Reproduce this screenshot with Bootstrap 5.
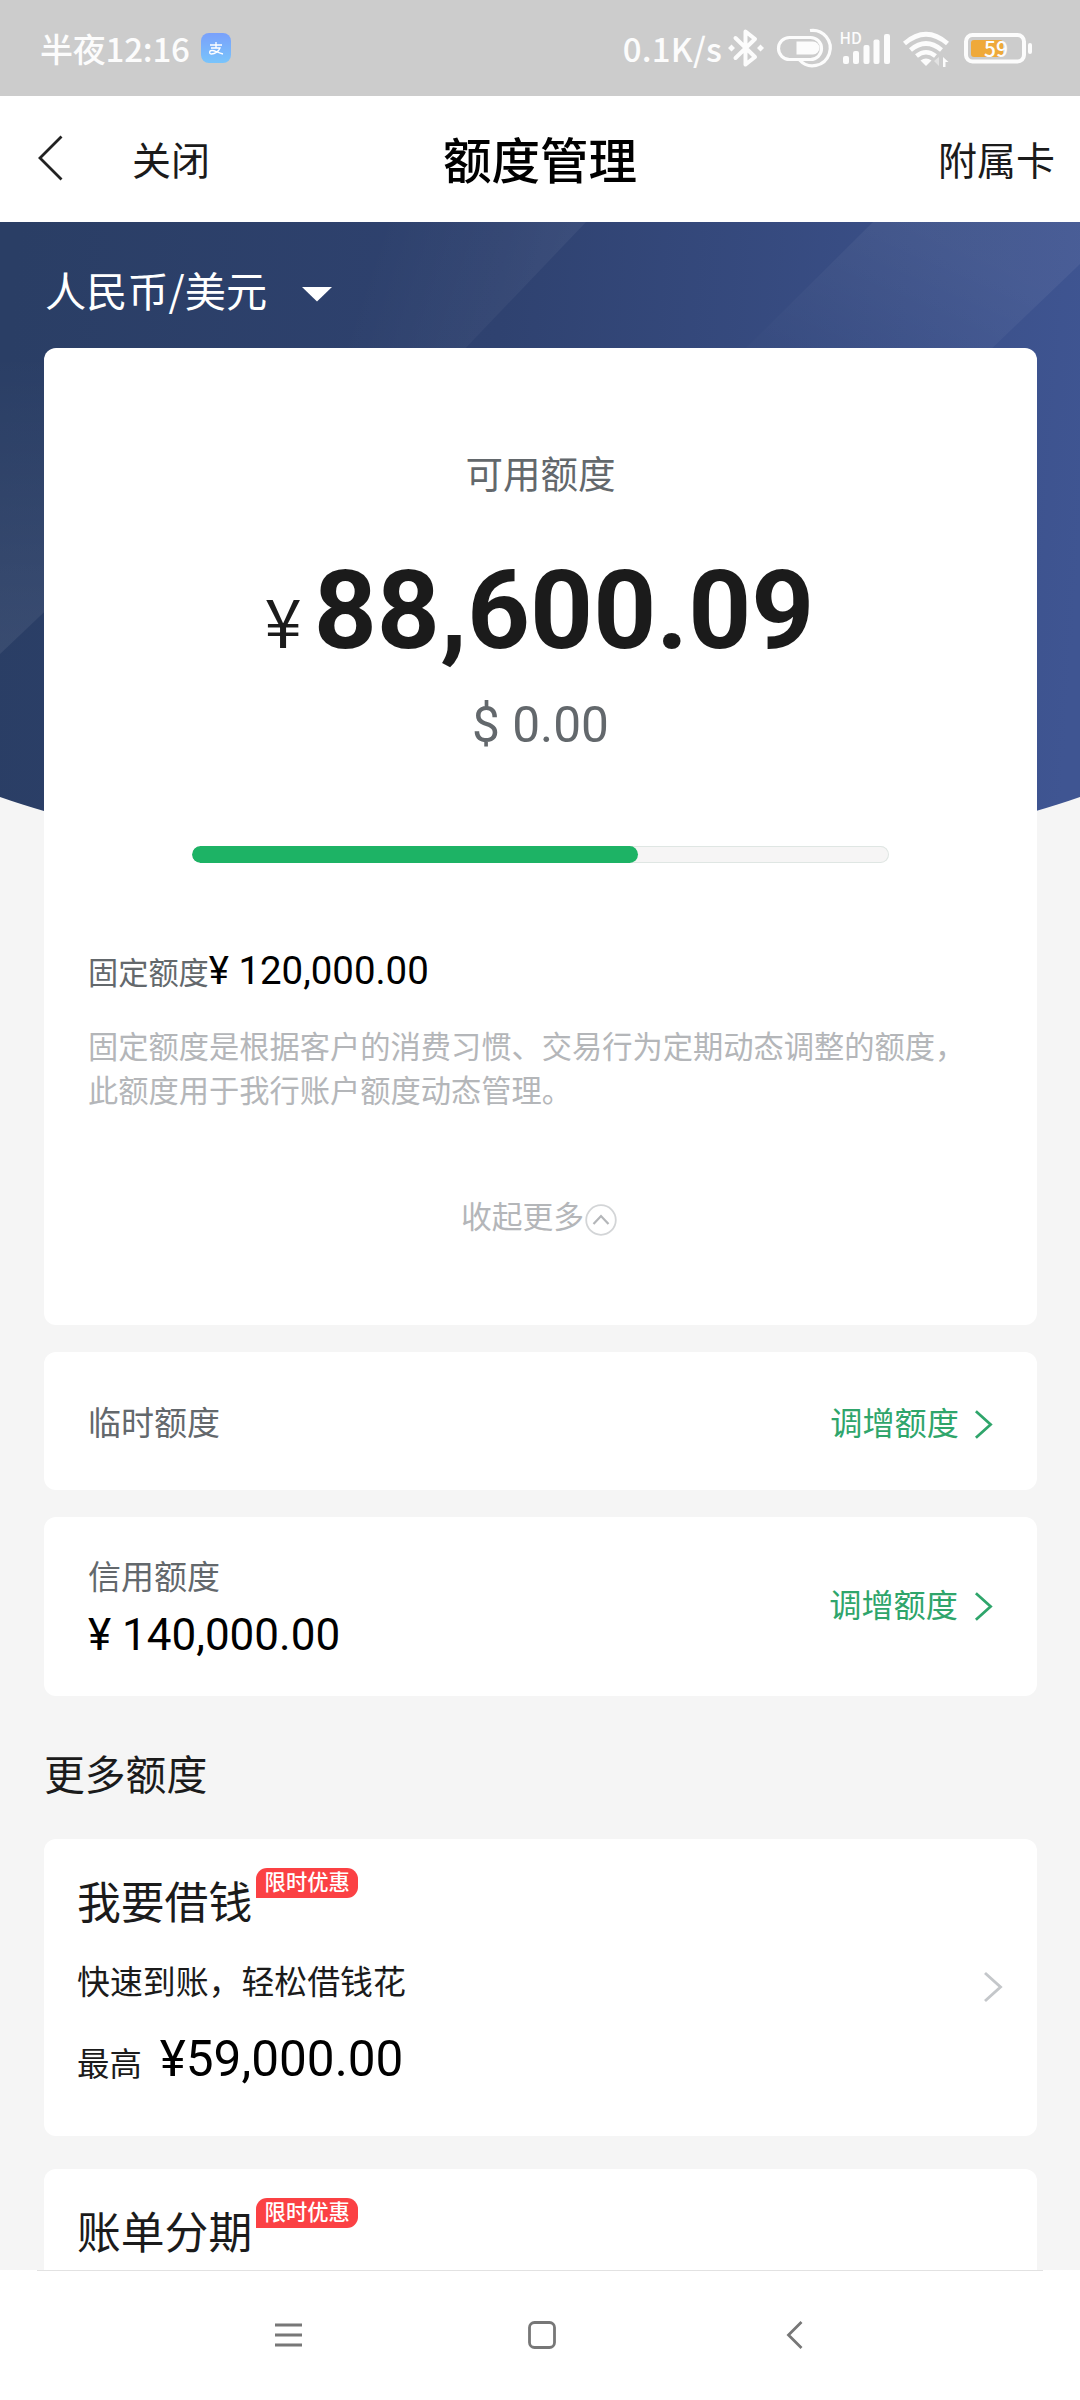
<!DOCTYPE html>
<html lang="zh-CN">
<head>
<meta charset="utf-8">
<meta name="viewport" content="width=device-width, initial-scale=1">
<title>额度管理</title>
<link href="https://cdn.jsdelivr.net/npm/bootstrap@5.3.0/dist/css/bootstrap.min.css" rel="stylesheet">
<style>
  body { width: 1080px; height: 2400px; overflow: hidden; background: #f5f5f5; color: #1b1b1b; font-family: "Noto Sans CJK SC", sans-serif; }
  svg { display: block; flex: none; }
  .num { font-family: Roboto, "Noto Sans CJK SC", sans-serif; color: #000; }
  .statusbar { height: 96px; background: #ccc; color: #fcfcfc; padding: 0 44px 0 40px; font-size: 33px; font-weight: 500; line-height: 44px; }
  .statusbar .clock { width: 161px; letter-spacing: -.2px; }
  .statusbar .rate { letter-spacing: .2px; margin-right: 2px; }
  .statusbar text { fill: #fcfcfc; }
  .titlebar { height: 126px; background: #fff; padding: 0 25px 3px 38px; font-size: 39px; line-height: 60px; }
  .titlebar h1 { font-size: 48.5px; font-weight: 500; line-height: 60px; color: #000; }
  .side-start { width: 240px; }
  .side-end { width: 253px; }
  .close-link { margin-left: 68px; }
  .backdrop { z-index: -1; top: 0; left: 0; }
  .hero { z-index: 0; }
  .currency { height: 126px; padding: 8px 45px 0; color: #fff; font-size: 41.2px; line-height: 60px; gap: 35px; }
  .currency svg { margin-top: 10px; }
  .sheet { margin: 0 43px 0 44px; background: #fff; border: 0; border-radius: 12px; }
  .sheet-main { height: 977px; padding: 104px 44px 0; }
  .label-gray { color: #63686c; }
  .avail { font-size: 37.5px; line-height: 40px; }
  .total { margin-top: 64px; height: 110px; color: #1b1b1b; gap: 12px; padding-right: 2px; }
  .total .yen { font-size: 67px; line-height: 67px; }
  .total .big { font-size: 110px; line-height: 110px; font-weight: 700; font-family: Roboto, sans-serif; }
  .usd { margin-top: 34px; font-size: 49.6px; line-height: 50px; font-family: Roboto, sans-serif; }
  .meter { margin: 96px 104px 0 104px; width: 697px; height: 17px; border-radius: 9px; background: #f6f5f5; box-shadow: inset 0 0 0 1px #dfe6e3; }
  .meter .progress-bar { background: #1db365; border-radius: 9px; }
  .fixed-row { margin-top: 86px; line-height: 44px; font-size: 30.2px; }
  .fixed-row .num { font-size: 38.4px; }
  .explain { margin: 30px -30px 0 0; font-size: 30.25px; line-height: 44px; color: #b4b6b9; }
  .collapse-link { margin-top: 83px; margin-right: 3px; font-size: 30.8px; line-height: 40px; color: #b4b6b9; gap: 1px; }
  .collapse-link svg { margin-top: 10px; }
  .limit { margin-top: 27px; padding: 0 44px; font-size: 33px; line-height: 46px; }
  .limit-temp { height: 138px; }
  .limit-credit { height: 179px; }
  .limit-credit .label-gray { margin-top: -2px; }
  .limit-credit .num { font-size: 44px; line-height: 50px; margin-top: 12px; }
  .raise { color: #2fa56b; font-size: 32.2px; gap: 15px; }
  .raise svg { margin-top: 6px; }
  .limit-credit .raise { gap: 16px; padding-bottom: 7px; }
  .section-title { margin: 47px 44px 0; font-size: 40.8px; font-weight: 400; line-height: 60px; }
  .offer { padding: 31px 34px 0; }
  .offer-loan { height: 297px; margin-top: 36px; }
  .offer-bill { height: 101px; margin-top: 33px; border-radius: 12px 12px 0 0; }
  .offer h3 { font-size: 43.8px; font-weight: 400; line-height: 60px; margin-left: -1px; }
  .offer-go { color: #c4c7ca; margin-bottom: 32px; }
  .promo { height: 30px; width: 102px; margin: -2px 0 0 4px; background: #fb4144; color: #fff; border-radius: 11px 11px 11px 0; font-size: 21.3px; line-height: 26px; font-weight: 500; }
  .desc { font-size: 32.9px; line-height: 46px; margin: 27px 0 0 -1px; }
  .upto { font-size: 32.4px; line-height: 60px; margin: 26px 0 0 -1px; gap: 18px; }
  .upto .num { font-size: 49.5px; }
  .rule { height: 1px; margin: 0 37px; background: #e2e2e2; }
  .sys-icons { height: 129px; padding: 0 277px 2px 275px; }
  .sys-home { margin-right: 5px; }
</style>
</head>
<body>
<svg width="0" height="0" class="position-absolute">
  <symbol id="chev" viewBox="0 0 20 32"><path d="M2 2L17.500 16L2 30" fill="none" stroke="currentColor" stroke-width="2.900"/></symbol>
</svg>

<div class="statusbar d-flex align-items-center">
  <span class="clock text-nowrap">半夜12:16</span>
  <svg width="30" height="30" viewBox="0 0 30 30">
    <defs><linearGradient id="app" x1="0" y1="0" x2="0" y2="1"><stop offset="0" stop-color="#79a0fb"/><stop offset="1" stop-color="#79c4fb"/></linearGradient></defs>
    <rect width="30" height="30" rx="8" fill="url(#app)"/>
    <path d="M9 12H21M15 9V15M10 15H19C18 18 14 21 10.500 21C8 21 8 17.500 11 17.500C14 17.500 17 20 22 21" fill="none" stroke="#fff" stroke-width="1.300"/>
  </svg>
  <span class="rate ms-auto text-nowrap">0.1K/s</span>
  <svg width="312" height="48" viewBox="724 24 312 48" fill="none" stroke="#fcfcfc">
    <path d="M735.500 38L755 57L745.500 64.500V31.500L755 39L735.500 58" stroke-width="4" stroke-linejoin="round" stroke-linecap="round"/>
    <path d="M731.500 44.500L735 48L731.500 51.500L728 48ZM760.500 44.500L764 48L760.500 51.500L757 48Z" fill="#fcfcfc" stroke="none"/>
    <rect x="778.500" y="37.500" width="43" height="22" rx="11" stroke-width="3.200"/>
    <path d="M796.500 41.500H813A6.500 6.500 0 0 1 813 54.500H796.500Z" fill="#fcfcfc" stroke="none"/>
    <path d="M810 30.500A17.700 17.700 0 1 1 799.500 60" stroke-width="3.200"/>
    <g fill="#fcfcfc" stroke="none">
      <rect x="843" y="56" width="6" height="8" rx="2"/><rect x="853" y="51" width="6" height="13" rx="2"/><rect x="863.500" y="45" width="6" height="19" rx="2"/><rect x="873.500" y="39.500" width="6" height="24.500" rx="2"/><rect x="884" y="34" width="6" height="30" rx="2"/>
      <text x="839.500" y="44" font-size="15.500" font-weight="500" stroke="none">HD</text>
      <path d="M920.500 60.500Q926 56.500 931.500 60.500L926 66Z"/>
      <path d="M934 61L939 57V66Z" opacity=".45"/><path d="M943 57L948.500 62H945.500V67H943Z"/>
    </g>
    <path d="M904.500 43.500Q926 25 947.500 43.500M910.500 50Q926 37 941.500 50M916.500 56Q926 48.500 935.500 56" stroke-width="4.600"/>
    <rect x="966" y="35" width="58" height="26.500" rx="6.500" stroke-width="4"/>
    <rect x="971" y="40" width="32" height="17" rx="3" fill="#efa93a" stroke="none"/>
    <rect x="1028" y="43" width="4" height="11" rx="2" fill="#fcfcfc" stroke="none"/>
    <text x="996" y="56.500" font-size="21" font-weight="500" text-anchor="middle" stroke="none">59</text>
  </svg>
</div>

<div class="titlebar d-flex align-items-center justify-content-between">
  <div class="side-start d-flex align-items-center">
    <svg width="26" height="46" viewBox="0 0 26 46"><path d="M23.500 1.500L2 23L23.500 44.500" fill="none" stroke="#222" stroke-width="2.800"/></svg>
    <span class="close-link">关闭</span>
  </div>
  <h1 class="mb-0">额度管理</h1>
  <div class="side-end text-end">附属卡</div>
</div>

<main>
  <section class="hero position-relative">
    <svg class="backdrop position-absolute" width="1080" height="600" viewBox="0 0 1080 600">
      <defs>
        <linearGradient id="sky" gradientUnits="userSpaceOnUse" x1="0" y1="250" x2="1080" y2="330"><stop offset="0" stop-color="#2a3e65"/><stop offset=".45" stop-color="#2f4270"/><stop offset="1" stop-color="#3f5592"/></linearGradient>
        <linearGradient id="b1" gradientUnits="userSpaceOnUse" x1="380" y1="0" x2="560" y2="60"><stop offset="0" stop-color="#fff" stop-opacity="0"/><stop offset="1" stop-color="#fff" stop-opacity=".05"/></linearGradient>
        <linearGradient id="b2" gradientUnits="userSpaceOnUse" x1="900" y1="0" x2="830" y2="150"><stop offset="0" stop-color="#fff" stop-opacity=".055"/><stop offset="1" stop-color="#fff" stop-opacity=".01"/></linearGradient>
        <linearGradient id="b3" x1="0" y1="0" x2="0" y2="1"><stop offset="0" stop-color="#fff" stop-opacity="0"/><stop offset="1" stop-color="#fff" stop-opacity=".07"/></linearGradient>
      </defs>
      <path d="M0 0H1080V575Q1060 582 1036 589Q540 700 44 589Q20 582 0 575Z" fill="url(#sky)"/>
      <path d="M300 0H586L460 132H300Z" fill="url(#b1)"/>
      <path d="M873 0H1080V42L986 132H740Z" fill="url(#b2)"/>
      <path d="M0 130H60V375L0 432Z" fill="url(#b3)"/>
    </svg>
    <div class="currency d-flex align-items-center">
      <span>人民币/美元</span>
      <svg width="30" height="15" viewBox="0 0 30 15"><path d="M0 0H30L15 14.500Z" fill="#fff"/></svg>
    </div>
    <div class="sheet sheet-main">
      <div class="avail label-gray text-center">可用额度</div>
      <div class="total d-flex justify-content-center align-items-baseline"><span class="yen">¥</span><span class="big">88,600.09</span></div>
      <div class="usd label-gray text-center">$ 0.00</div>
      <div class="progress meter"><div class="progress-bar" style="width:64%"></div></div>
      <div class="fixed-row d-flex align-items-baseline"><span class="label-gray">固定额度</span><span class="num">¥ 120,000.00</span></div>
      <p class="explain mb-0">固定额度是根据客户的消费习惯、交易行为定期动态调整的额度，<br>此额度用于我行账户额度动态管理。</p>
      <div class="collapse-link d-flex justify-content-center align-items-center">
        <span>收起更多</span>
        <svg width="32" height="32" viewBox="0 0 32 32" fill="none"><circle cx="16" cy="16" r="14.800" stroke="#d3d5d7" stroke-width="1.800"/><path d="M8.500 20L16 12L23.500 20" stroke="#b4b6b9" stroke-width="2.200"/></svg>
      </div>
    </div>
  </section>

  <div class="sheet limit limit-temp d-flex align-items-center justify-content-between">
    <span class="label-gray">临时额度</span>
    <span class="raise d-flex align-items-center">调增额度<svg width="19" height="31"><use href="#chev"/></svg></span>
  </div>
  <div class="sheet limit limit-credit d-flex align-items-center justify-content-between">
    <div><div class="label-gray">信用额度</div><div class="num">¥ 140,000.00</div></div>
    <span class="raise d-flex align-items-center">调增额度<svg width="19" height="31"><use href="#chev"/></svg></span>
  </div>

  <h2 class="section-title">更多额度</h2>

  <div class="sheet offer offer-loan d-flex justify-content-between">
    <div>
      <div class="d-flex"><h3 class="mb-0">我要借钱</h3><span class="promo text-center">限时优惠</span></div>
      <div class="desc">快速到账，轻松借钱花</div>
      <div class="upto d-flex align-items-baseline"><span>最高</span><span class="num">¥59,000.00</span></div>
    </div>
    <svg width="20" height="34" class="offer-go align-self-center"><use href="#chev"/></svg>
  </div>
  <div class="sheet offer offer-bill">
    <div class="d-flex"><h3 class="mb-0">账单分期</h3><span class="promo text-center">限时优惠</span></div>
  </div>
</main>

<nav class="bg-white">
  <div class="rule"></div>
  <div class="sys-icons d-flex align-items-center justify-content-between">
    <svg width="27" height="24" viewBox="0 0 27 24"><path d="M0 2H27M0 12H27M0 22H27" stroke="#777" stroke-width="2.800"/></svg>
    <svg class="sys-home" width="28" height="28" viewBox="0 0 28 28"><rect x="1.500" y="1.500" width="25" height="25" rx="5" fill="none" stroke="#777" stroke-width="2.800"/></svg>
    <svg width="17" height="28" viewBox="0 0 17 28"><path d="M15.500 1L2.500 14L15.500 27" fill="none" stroke="#777" stroke-width="2.800"/></svg>
  </div>
</nav>
<script src="https://cdn.jsdelivr.net/npm/bootstrap@5.3.0/dist/js/bootstrap.bundle.min.js"></script>
</body>
</html>
